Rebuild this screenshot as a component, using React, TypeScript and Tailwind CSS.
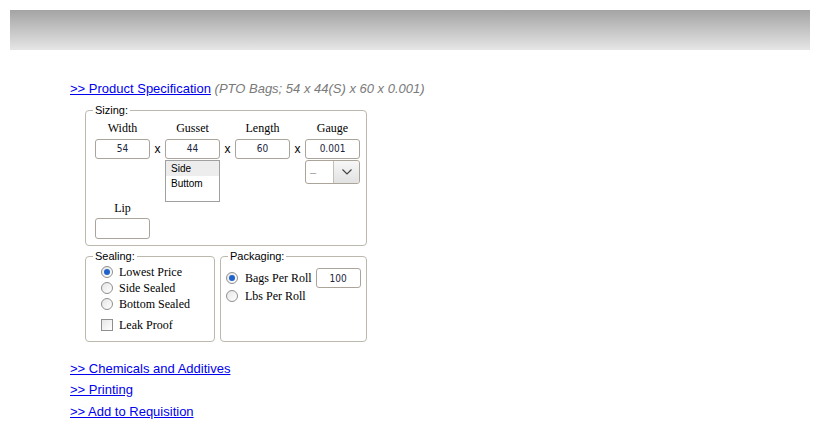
export default function App() {
  const serif = "font-['Liberation_Serif','Times_New_Roman',serif]";
  const inputBox =
    "h-[20px] w-[55px] border border-[#aaa49a] rounded-[3px] bg-white flex items-center justify-center text-[10px] text-[#1c2540] font-['DejaVu_Sans_Condensed','DejaVu_Sans',sans-serif]";

  const Radio = ({ checked }: { checked?: boolean }) => (
    <span className="w-[12px] h-[12px] rounded-full border border-[#8e8f8f] bg-gradient-to-br from-[#e6e6e6] to-white flex items-center justify-center shrink-0">
      {checked && <span className="w-[6px] h-[6px] rounded-full bg-[#1f62c9]" />}
    </span>
  );

  return (
    <div className="min-h-screen bg-white p-[10px] font-['Liberation_Sans',Arial,sans-serif]">
      <div className="h-10 bg-gradient-to-b from-[#a4a4a4] to-[#e6e6e6]" />

      <div className="ml-[60px] mt-[31px]">
        <div className="text-[13px] leading-[15px]">
          <a href="#" className="text-[#0000ee] underline">&gt;&gt; Product Specification</a>{" "}
          <span className="italic text-[#7a7a7a]">(PTO Bags; 54 x 44(S) x 60 x 0.001)</span>
        </div>

        <fieldset className="ml-[15px] mt-[8px] w-[282px] border border-[#bcb8ae] rounded-[4px] pl-[9px] pt-[4px] pb-[6px]">
          <legend className="text-[11px] leading-[13px] px-[2px] -ml-[2px]">Sizing:</legend>
          <div className={`grid grid-cols-[55px_15px_55px_15px_55px_15px_55px] ${serif} text-[12px] leading-[14px]`}>
            <div className="text-center">Width</div>
            <div />
            <div className="text-center">Gusset</div>
            <div />
            <div className="text-center">Length</div>
            <div />
            <div className="text-center">Gauge</div>

            <div className={`${inputBox} mt-[4px]`}>54</div>
            <div className="mt-[4px] h-[20px] flex items-center justify-center text-[12px] font-['Liberation_Sans',Arial,sans-serif]">x</div>
            <div className={`${inputBox} mt-[4px]`}>44</div>
            <div className="mt-[4px] h-[20px] flex items-center justify-center text-[12px] font-['Liberation_Sans',Arial,sans-serif]">x</div>
            <div className={`${inputBox} mt-[4px]`}>60</div>
            <div className="mt-[4px] h-[20px] flex items-center justify-center text-[12px] font-['Liberation_Sans',Arial,sans-serif]">x</div>
            <div className={`${inputBox} mt-[4px]`}>0.001</div>

            <div />
            <div />
            <div className="mt-[1px] h-[42px] w-[55px] border border-[#a0a0a0] bg-white font-['Liberation_Sans',Arial,sans-serif] text-[10px] leading-[15px]">
              <div className="bg-[#ededed] pl-[5px]">Side</div>
              <div className="pl-[5px]">Buttom</div>
            </div>
            <div />
            <div />
            <div />
            <div className="mt-[1px] h-[24px] w-[55px] border border-[#aaa49a] rounded-[3px] bg-white flex self-start">
              <div className="flex-1 flex items-center pl-[4px] text-[11px] text-[#999] font-['Liberation_Sans',Arial,sans-serif]">–</div>
              <div className="w-[26px] border-l border-[#c4c0b6] bg-gradient-to-b from-[#f7f7f7] to-[#e2e2e2] rounded-r-[3px] flex items-center justify-center">
                <svg width="10" height="6" viewBox="0 0 10 6" fill="none">
                  <path d="M0.5 0.5 L5 5 L9.5 0.5" stroke="#444" strokeWidth="1.2" />
                </svg>
              </div>
            </div>
          </div>

          <div className={`${serif} text-[12px] leading-[13px] w-[55px] text-center`}>Lip</div>
          <div className="mt-[3px] h-[21px] w-[55px] border border-[#aaa49a] rounded-[3px] bg-white" />
        </fieldset>

        <div className="ml-[15px] mt-[4px] flex gap-[5px] items-stretch">
          <fieldset className="w-[130px] border border-[#bcb8ae] rounded-[4px] pl-[9px] pt-[1px] pb-[8px]">
            <legend className="text-[11px] leading-[13px] px-[2px] -ml-[2px]">Sealing:</legend>
            <div className={`${serif} text-[12px] pl-[6px]`}>
              <div className="h-[16px] flex items-center gap-[6px]"><Radio checked />Lowest Price</div>
              <div className="h-[16px] flex items-center gap-[6px]"><Radio />Side Sealed</div>
              <div className="h-[16px] flex items-center gap-[6px]"><Radio />Bottom Sealed</div>
              <div className="mt-[5px] h-[16px] flex items-center gap-[6px]">
                <span className="w-[12px] h-[12px] border border-[#8e8f8f] bg-gradient-to-br from-[#e6e6e6] to-white shrink-0" />
                Leak Proof
              </div>
            </div>
          </fieldset>

          <fieldset className="w-[147px] border border-[#bcb8ae] rounded-[4px] pl-[9px] pt-[5px] pb-[8px]">
            <legend className="text-[11px] leading-[13px] px-[2px] -ml-[2px]">Packaging:</legend>
            <div className={`${serif} text-[12px] -ml-[4px]`}>
              <div className="h-[20px] flex items-center">
                <span className="flex items-center gap-[7px]"><Radio checked />Bags Per Roll</span>
                <div className="ml-[4px] h-[20px] w-[45px] border border-[#aaa49a] rounded-[3px] bg-white flex items-center justify-center text-[10px] text-[#1c2540] font-['DejaVu_Sans_Condensed','DejaVu_Sans',sans-serif]">100</div>
              </div>
              <div className="h-[15px] flex items-center gap-[7px]"><Radio />Lbs Per Roll</div>
            </div>
          </fieldset>
        </div>

        <div className="mt-[16px] text-[13px] leading-[22px]">
          <div><a href="#" className="text-[#0000ee] underline">&gt;&gt; Chemicals and Additives</a></div>
          <div className="-mt-[1px]"><a href="#" className="text-[#0000ee] underline">&gt;&gt; Printing</a></div>
          <div><a href="#" className="text-[#0000ee] underline">&gt;&gt; Add to Requisition</a></div>
        </div>
      </div>
    </div>
  );
}
